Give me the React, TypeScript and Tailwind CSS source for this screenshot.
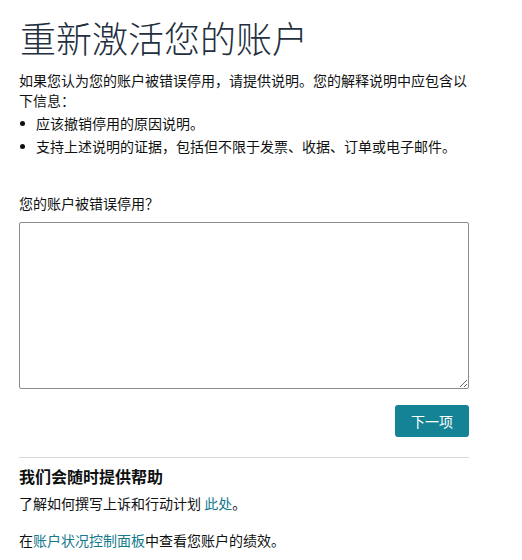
import React from "react";

export default function App() {
  return (
    <div
      className="w-[522px] h-[560px] bg-white text-[#0f1111] overflow-hidden"
      style={{ fontFamily: '"Noto Sans CJK SC", "Noto Sans", sans-serif' }}
    >
      <div className="w-[450px] ml-[19px] pt-[16px]">
        <h1 className="text-[36px] leading-[43px] font-light text-[#232f3e] ml-[1px]">
          重新激活您的账户
        </h1>
        <p className="mt-[11px] text-[14px] leading-[20px]">
          如果您认为您的账户被错误停用，请提供说明。您的解释说明中应包含以下信息：
        </p>
        <ul className="mt-[3px] text-[14px] leading-[20px] flex flex-col gap-[3px]">
          <li className="flex items-center">
            <span className="w-[17px] shrink-0 pl-[1px] flex items-center">
              <span className="w-[5px] h-[5px] rounded-full bg-[#0f1111]" />
            </span>
            <span>应该撤销停用的原因说明。</span>
          </li>
          <li className="flex items-center">
            <span className="w-[17px] shrink-0 pl-[1px] flex items-center">
              <span className="w-[5px] h-[5px] rounded-full bg-[#0f1111]" />
            </span>
            <span>支持上述说明的证据，包括但不限于发票、收据、订单或电子邮件。</span>
          </li>
        </ul>
        <label className="block mt-[37px] text-[14px] leading-[20px]">
          您的账户被错误停用？
        </label>
        <textarea className="block mt-[9px] w-[450px] h-[167px] border border-[#888c8c] rounded-[2px] bg-white outline-none" />
        <div className="flex justify-end mt-[16px]">
          <button className="h-[32px] w-[74px] rounded-[3px] bg-[#148396] text-white text-[14px] leading-[20px]">
            下一项
          </button>
        </div>
        <div className="mt-[20px] border-t border-[#d5d9d9]" />
        <h2 className="mt-[7px] text-[16px] leading-[22px] font-bold">
          我们会随时提供帮助
        </h2>
        <p className="mt-[6px] text-[14px] leading-[20px]">
          了解如何撰写上诉和行动计划 <span className="text-[#137a8a]">此处</span>。
        </p>
        <p className="mt-[17px] text-[14px] leading-[20px]">
          在<span className="text-[#137a8a]">账户状况控制面板</span>中查看您账户的绩效。
        </p>
      </div>
    </div>
  );
}
